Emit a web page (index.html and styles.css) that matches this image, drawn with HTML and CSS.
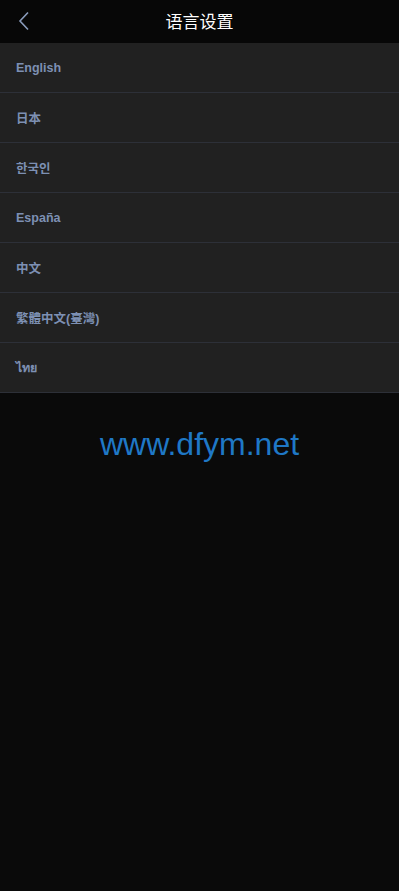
FILE: index.html
```html
<!DOCTYPE html>
<html lang="zh">
<head>
<meta charset="utf-8">
<title>语言设置</title>
<link rel="stylesheet" href="styles.css">
</head>
<body>
<header class="bar">
  <span class="back">
    <svg width="12" height="20" viewBox="0 0 12 20"><path d="M10 1.5 L2 10 L10 18.5" fill="none" stroke="#8a9cbc" stroke-width="1.6"/></svg>
  </span>
  <h1 class="title">语言设置</h1>
</header>
<ul class="list">
  <li>English</li>
  <li>日本</li>
  <li>한국인</li>
  <li>España</li>
  <li>中文</li>
  <li>繁體中文(臺灣)</li>
  <li>ไทย</li>
</ul>
<div class="mark">www.dfym.net</div>
</body>
</html>
```
FILE: styles.css
```css
html, body { margin: 0; padding: 0; }
body {
  background: #0a0a0a;
  font-family: "Liberation Sans", Arial, "Noto Sans CJK SC", sans-serif;
  min-height: 891px;
}
.bar {
  height: 43px;
  background: #070707;
  display: flex;
  align-items: center;
  justify-content: center;
  position: relative;
}
.back {
  position: absolute;
  left: 18px;
  top: 11px;
  display: flex;
}
.title {
  margin: 0;
  color: #ffffff;
  font-size: 17px;
  font-weight: normal;
  font-family: "Noto Sans CJK SC", sans-serif;
  padding-bottom: 2px;
}
.list {
  list-style: none;
  margin: 0;
  padding: 0;
  background: #212121;
}
.list li {
  height: 49px;
  border-bottom: 1px solid #2d3038;
  display: flex;
  align-items: center;
  padding-left: 16px;
  color: #7d90b3;
  font-size: 12.5px;
  font-weight: bold;
  font-family: "Liberation Sans", Arial, "Noto Sans CJK SC", sans-serif;
}
.mark {
  text-align: center;
  color: #1f78c6;
  font-size: 32px;
  font-family: "Liberation Sans", Arial, sans-serif;
  margin-top: 33px;
}
```
